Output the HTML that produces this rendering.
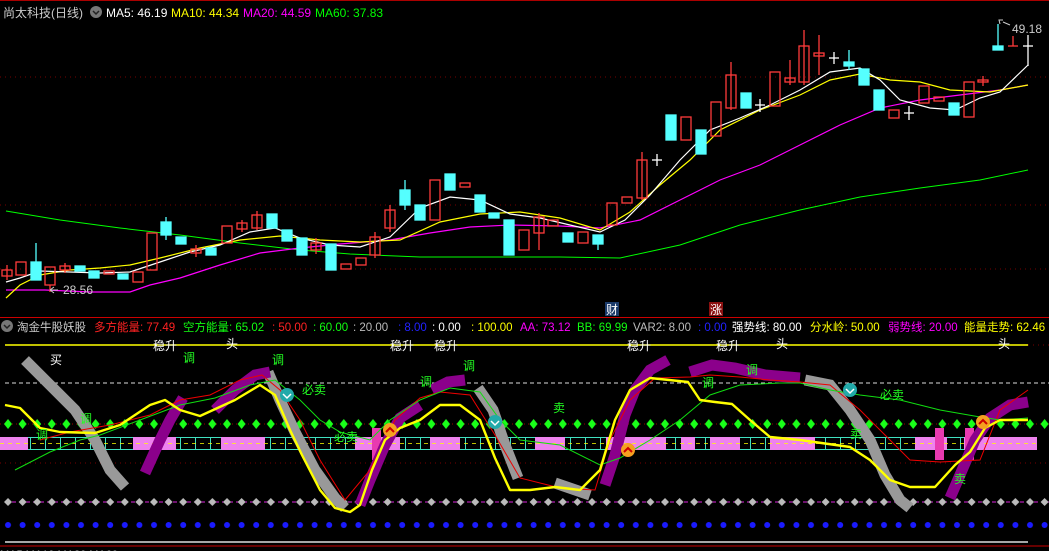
<!DOCTYPE html>
<html><head><meta charset="utf-8"><style>
html,body{margin:0;padding:0;background:#000;width:1049px;height:551px;overflow:hidden}
svg{display:block}
text{font-family:"Liberation Sans","Noto Sans CJK SC",sans-serif}
</style></head><body>
<svg width="1049" height="551" viewBox="0 0 1049 551" xmlns="http://www.w3.org/2000/svg">
<defs>
<pattern id="gd" x="3" y="0" width="14.6" height="551" patternUnits="userSpaceOnUse"><path d="M5 419 L9 424 L5 429 L1 424Z" fill="#19ff19"/></pattern>
<pattern id="wd" x="3" y="0" width="14.6" height="551" patternUnits="userSpaceOnUse"><path d="M5 498 L9 502 L5 506 L1 502Z" fill="#bbb"/></pattern>
<pattern id="bd" x="3" y="0" width="14.6" height="551" patternUnits="userSpaceOnUse"><circle cx="5" cy="525" r="3" fill="#1a1aff"/></pattern>
<pattern id="bx" x="0" y="0" width="15" height="551" patternUnits="userSpaceOnUse"><rect x="0.5" y="437.5" width="15" height="12" fill="none" stroke="#40e0c0" stroke-width="1"/></pattern>
</defs>
<rect width="1049" height="551" fill="#000"/>
<line x1="0" y1="0.5" x2="1049" y2="0.5" stroke="#a00" />
<line x1="0" y1="317.5" x2="1049" y2="317.5" stroke="#c00"/>
<line x1="0" y1="205" x2="1049" y2="205" stroke="#700" stroke-dasharray="1 4"/>
<line x1="0" y1="269" x2="1049" y2="269" stroke="#700" stroke-dasharray="1 4"/>
<line x1="0" y1="77" x2="1049" y2="77" stroke="#700" stroke-dasharray="1 4"/>
<!-- header -->
<text y="17" font-size="12"><tspan x="3" fill="#ccc">尚太科技(日线)</tspan><tspan x="106" fill="#fff">MA5: 46.19</tspan><tspan x="171" fill="#ff0">MA10: 44.34</tspan><tspan x="243" fill="#f0f">MA20: 44.59</tspan><tspan x="315" fill="#0f0">MA60: 37.83</tspan></text>
<circle cx="96" cy="12" r="6" fill="#777"/><path d="M93 11 L96 14 L99 11" stroke="#222" fill="none" stroke-width="1.5"/>
<!-- MA lines -->
<polyline fill="none" stroke="#0f0" stroke-width="1" points="6,211 60,220 120,228 180,235 240,243 300,250 350,254 420,257 500,257 560,257 620,258 680,245 740,225 800,210 860,197 920,188 980,180 1028,170"/>
<polyline fill="none" stroke="#f0f" stroke-width="1.2" points="6,290 45,290 90,292 130,292 150,285 180,278 220,265 260,253 300,248 340,244 390,240 430,233 470,227 510,225 560,226 600,228 640,220 680,200 720,180 760,165 800,145 840,125 880,108 920,100 960,95 1000,90 1028,85"/>
<polyline fill="none" stroke="#ff0" stroke-width="1.2" points="6,298 20,285 40,275 70,270 100,268 130,265 160,258 200,248 240,240 280,236 320,240 360,242 400,240 440,222 480,214 520,212 560,218 600,230 630,212 660,185 690,160 720,130 760,110 800,95 830,80 860,74 890,80 920,82 950,90 990,92 1028,85"/>
<polyline fill="none" stroke="#fff" stroke-width="1.2" points="6,282 20,278 40,271 70,272 100,273 130,272 160,262 190,252 220,245 250,232 275,228 300,238 330,245 360,247 390,237 420,208 450,197 480,200 510,214 540,218 570,225 600,232 625,220 650,195 680,160 710,130 740,118 770,105 800,90 830,72 860,68 880,80 900,100 930,108 955,110 980,98 1000,92 1028,65"/>
<!-- candles -->
<g stroke-width="1.3">
<g stroke="#ff3b3b" fill="none">
<line x1="7" y1="265" x2="7" y2="280"/><rect x="2" y="270" width="10" height="6"/>
<rect x="16" y="262" width="10" height="13"/>
<rect x="45" y="267" width="10" height="18"/><line x1="50" y1="285" x2="50" y2="292"/>
<rect x="60" y="266" width="10" height="4"/><line x1="65" y1="263" x2="65" y2="273"/>
<rect x="104" y="271" width="10" height="3"/>
<rect x="133" y="272" width="10" height="10"/>
<rect x="147" y="233" width="10" height="37"/>
<rect x="191" y="249" width="10" height="4"/><line x1="196" y1="245" x2="196" y2="257"/>
<rect x="222" y="226" width="10" height="17"/>
<rect x="237" y="223" width="10" height="6"/><line x1="242" y1="220" x2="242" y2="232"/>
<rect x="252" y="215" width="10" height="13"/><line x1="257" y1="211" x2="257" y2="230"/>
<rect x="311" y="243" width="10" height="7"/><line x1="316" y1="238" x2="316" y2="254"/>
<rect x="341" y="264" width="10" height="5"/>
<rect x="356" y="258" width="10" height="7"/>
<rect x="370" y="237" width="10" height="18"/><line x1="375" y1="232" x2="375" y2="258"/>
<rect x="385" y="210" width="10" height="18"/><line x1="390" y1="205" x2="390" y2="232"/>
<rect x="430" y="180" width="10" height="40"/>
<rect x="460" y="183" width="10" height="4"/>
<rect x="519" y="230" width="10" height="20"/>
<rect x="534" y="217" width="10" height="16"/><line x1="539" y1="213" x2="539" y2="250"/>
<rect x="548" y="220" width="10" height="6"/>
<rect x="578" y="232" width="10" height="11"/>
<rect x="607" y="203" width="10" height="22"/>
<rect x="622" y="197" width="10" height="6"/>
<rect x="637" y="160" width="10" height="38"/><line x1="642" y1="152" x2="642" y2="200"/>
<rect x="681" y="117" width="10" height="23"/>
<rect x="711" y="102" width="10" height="34"/>
<rect x="726" y="75" width="10" height="33"/><line x1="731" y1="62" x2="731" y2="110"/>
<rect x="770" y="72" width="10" height="34"/>
<rect x="785" y="78" width="10" height="4"/><line x1="790" y1="60" x2="790" y2="85"/>
<rect x="799" y="46" width="10" height="36"/><line x1="804" y1="30" x2="804" y2="85"/>
<rect x="814" y="53" width="10" height="3"/><line x1="819" y1="35" x2="819" y2="75"/>
<rect x="889" y="110" width="10" height="8"/>
<rect x="919" y="86" width="10" height="17"/>
<rect x="934" y="97" width="10" height="4"/>
<rect x="964" y="82" width="10" height="35"/>
<rect x="978" y="80" width="10" height="2"/><line x1="983" y1="76" x2="983" y2="86"/>
</g>
<g stroke="#55ffff" fill="#55ffff">
<rect x="31" y="262" width="10" height="18"/><line x1="36" y1="243" x2="36" y2="262"/>
<rect x="75" y="266" width="10" height="5"/>
<rect x="89" y="271" width="10" height="7"/>
<rect x="118" y="274" width="10" height="5"/>
<rect x="161" y="222" width="10" height="13"/><line x1="166" y1="217" x2="166" y2="240"/>
<rect x="176" y="237" width="10" height="7"/>
<rect x="206" y="248" width="10" height="7"/>
<rect x="267" y="214" width="10" height="14"/>
<rect x="282" y="230" width="10" height="11"/>
<rect x="297" y="238" width="10" height="17"/>
<rect x="326" y="244" width="10" height="26"/>
<rect x="400" y="190" width="10" height="15"/><line x1="405" y1="180" x2="405" y2="210"/>
<rect x="415" y="205" width="10" height="15"/>
<rect x="445" y="174" width="10" height="16"/>
<rect x="475" y="195" width="10" height="17"/>
<rect x="489" y="213" width="10" height="5"/>
<rect x="504" y="220" width="10" height="35"/>
<rect x="563" y="233" width="10" height="9"/>
<rect x="593" y="235" width="10" height="9"/><line x1="598" y1="244" x2="598" y2="250"/>
<rect x="666" y="115" width="10" height="25"/>
<rect x="696" y="130" width="10" height="24"/>
<rect x="741" y="93" width="10" height="15"/>
<rect x="844" y="62" width="10" height="4"/><line x1="849" y1="50" x2="849" y2="70"/>
<rect x="859" y="69" width="10" height="16"/>
<rect x="874" y="90" width="10" height="20"/>
<rect x="949" y="103" width="10" height="12"/>
<rect x="993" y="46" width="10" height="4"/><line x1="998" y1="24" x2="998" y2="46"/>
</g>
<g stroke="#fff" fill="none">
<line x1="652" y1="160" x2="662" y2="160"/><line x1="657" y1="154" x2="657" y2="166"/>
<line x1="755" y1="105" x2="765" y2="105"/><line x1="760" y1="99" x2="760" y2="112"/>
<line x1="829" y1="58" x2="839" y2="58"/><line x1="834" y1="52" x2="834" y2="64"/>
<line x1="904" y1="113" x2="914" y2="113"/><line x1="909" y1="106" x2="909" y2="120"/>
<line x1="1023" y1="46" x2="1033" y2="46"/><line x1="1028" y1="35" x2="1028" y2="66"/>
<line x1="1008" y1="46" x2="1018" y2="46" stroke="#ff3b3b"/><line x1="1013" y1="36" x2="1013" y2="46" stroke="#ff3b3b"/>
</g>
</g>
<path d="M1000 24 L999 20 L1003 20 M1003 22 L1010 25" stroke="#ccc" fill="none"/>
<text x="1012" y="33" font-size="12" fill="#ccc">49.18</text>
<path d="M58 290 L50 290 M50 290 L54 287 M50 290 L54 293" stroke="#ccc" fill="none"/>
<text x="63" y="294" font-size="12" fill="#ccc">28.56</text>
<rect x="605" y="302" width="14" height="14" fill="#1a3a6a"/><text x="606" y="314" font-size="12" fill="#fff">财</text>
<rect x="709" y="302" width="14" height="14" fill="#8a1010"/><text x="710" y="314" font-size="12" fill="#fff">涨</text>
<!-- lower header -->
<circle cx="7" cy="326" r="6" fill="#777"/><path d="M4 325 L7 328 L10 325" stroke="#222" fill="none" stroke-width="1.5"/>
<text y="331" font-size="11.5"><tspan x="17" fill="#ccc">淘金牛股妖股</tspan><tspan x="94" fill="#f22">多方能量: 77.49</tspan><tspan x="183" fill="#1f1">空方能量: 65.02</tspan><tspan x="272" fill="#f22">: 50.00</tspan><tspan x="313" fill="#1f1">: 60.00</tspan><tspan x="353" fill="#bbb">: 20.00</tspan><tspan x="398" fill="#22f">: 8.00</tspan><tspan x="432" fill="#fff">: 0.00</tspan><tspan x="471" fill="#ff0">: 100.00</tspan><tspan x="520" fill="#f0f">AA: 73.12</tspan><tspan x="577" fill="#1f1">BB: 69.99</tspan><tspan x="633" fill="#bbb">VAR2: 8.00</tspan><tspan x="698" fill="#22f">: 0.00</tspan><tspan x="732" fill="#fff">强势线: 80.00</tspan><tspan x="810" fill="#ff0">分水岭: 50.00</tspan><tspan x="888" fill="#f0f">弱势线: 20.00</tspan><tspan x="964" fill="#ff0">能量走势: 62.46</tspan></text>
<!-- lower panel guides -->
<line x1="5" y1="345" x2="1028" y2="345" stroke="#ff0" stroke-width="1.5"/>
<line x1="1028" y1="345" x2="1049" y2="345" stroke="#700" stroke-dasharray="1 4"/>
<line x1="5" y1="383" x2="1049" y2="383" stroke="#ddd" stroke-dasharray="4 3"/>
<line x1="0" y1="424" x2="1049" y2="424" stroke="#900" stroke-dasharray="1 3"/>
<line x1="0" y1="463" x2="1049" y2="463" stroke="#700" stroke-dasharray="1 4"/>
<line x1="5" y1="502" x2="1049" y2="502" stroke="#d2d" stroke-dasharray="4 3"/>
<line x1="5" y1="542" x2="1028" y2="542" stroke="#ddd" stroke-width="1.5"/>
<line x1="0" y1="546" x2="1049" y2="546" stroke="#c00"/>
<rect x="0" y="415" width="1049" height="18" fill="url(#gd)"/>
<rect x="0" y="495" width="1049" height="14" fill="url(#wd)"/>
<rect x="0" y="519" width="1049" height="12" fill="url(#bd)"/>
<!-- band -->
<rect x="28" y="437" width="1008" height="13" fill="url(#bx)"/>
<g fill="#ee82ee">
<rect x="0" y="437" width="28" height="13"/><rect x="133" y="437" width="43" height="13"/><rect x="221" y="437" width="44" height="13"/>
<rect x="355" y="437" width="45" height="13"/><rect x="430" y="437" width="30" height="13"/><rect x="535" y="437" width="30" height="13"/>
<rect x="606" y="437" width="60" height="13"/><rect x="681" y="437" width="14" height="13"/><rect x="710" y="437" width="30" height="13"/>
<rect x="770" y="437" width="45" height="13"/><rect x="915" y="437" width="32" height="13"/><rect x="964" y="437" width="73" height="13"/>
</g>
<line x1="0" y1="443.5" x2="1036" y2="443.5" stroke="#ff0" stroke-dasharray="4 4" stroke-width="0.8"/>
<g fill="#e83ab0"><rect x="372" y="428" width="9" height="32"/><rect x="935" y="428" width="9" height="32"/><rect x="965" y="428" width="9" height="32"/></g>
<!-- ribbons -->
<g fill="none" stroke-linejoin="miter" stroke-linecap="butt">
<g stroke="#999" stroke-width="11">
<polyline points="25,360 50,385 75,410 95,440 110,470 125,487"/>
<polyline points="268,372 280,400 295,432 315,470 335,498 345,508"/>
<polyline points="478,388 493,410 505,445 518,478"/>
<polyline points="555,483 590,495"/>
<polyline points="805,380 830,385 850,410 870,440 885,475 900,500 910,508"/>
</g>
<g stroke="#8b008b" stroke-width="11">
<polyline points="145,473 160,440 170,420 183,398"/>
<polyline points="215,410 235,390 255,375 270,372"/>
<polyline points="360,505 370,480 385,445 400,418 420,405"/>
<polyline points="432,390 448,382 465,380"/>
<polyline points="605,485 615,455 625,415 635,390 650,370 668,360"/>
<polyline points="690,372 712,365 735,368 765,375 800,378"/>
<polyline points="950,498 960,475 975,440 990,418 1010,405 1028,402"/>
</g>
<polyline stroke="#e00" stroke-width="1" points="40,440 70,432 110,425 150,415 180,400 210,395 240,380 262,375 280,390 300,420 320,460 345,500 370,470 395,420 420,398 440,392 470,395 495,435 520,478 560,488 595,490 610,440 630,400 655,378 690,377 710,375 740,377 770,380 800,382 830,385 860,410 880,430 910,460 940,462 980,460 1000,410 1028,390"/>
<polyline stroke="#1d1" stroke-width="1" points="15,470 50,452 80,440 100,435 140,420 180,405 215,398 250,385 275,380 300,400 320,420 340,432 370,440 390,420 420,400 450,388 480,392 500,420 520,440 560,445 600,465 620,458 650,440 680,420 710,395 740,385 780,383 800,383 830,390 860,395 900,400 940,410 980,417 1000,420 1028,418"/>
<polyline stroke="#ff0" stroke-width="2.4" stroke-linejoin="round" points="5,405 20,408 40,428 60,432 95,433 120,425 150,405 165,400 180,410 200,416 235,400 260,385 275,395 290,430 302,455 320,490 335,508 350,512 360,505 372,470 385,440 400,428 420,420 440,405 460,405 480,420 495,458 510,490 530,490 555,487 580,490 600,470 615,420 630,390 650,378 688,382 700,400 715,402 732,404 750,420 770,437 800,440 850,447 870,460 890,480 910,487 935,487 955,465 970,452 985,428 1000,420 1028,420"/>
</g>
<!-- labels -->
<g font-size="12" fill="#fff">
<text x="50" y="364">买</text><text x="153" y="350">稳升</text><text x="226" y="348">头</text>
<text x="390" y="350">稳升</text><text x="434" y="350">稳升</text><text x="627" y="350">稳升</text>
<text x="716" y="350">稳升</text><text x="776" y="348">头</text><text x="998" y="348">头</text>
</g>
<g font-size="12" fill="#2f2">
<text x="183" y="362">调</text><text x="272" y="364">调</text><text x="80" y="423">调</text><text x="36" y="439">调</text>
<text x="420" y="386">调</text><text x="463" y="370">调</text><text x="702" y="387">调</text><text x="746" y="374">调</text>
<text x="553" y="412">卖</text><text x="850" y="438">卖</text><text x="954" y="483">卖</text>
<text x="302" y="394">必卖</text><text x="334" y="441">必卖</text><text x="880" y="399">必卖</text>
</g>
<g>
<circle cx="287" cy="395" r="7" fill="#2aa"/><path d="M283 394 L287 398 L291 394" stroke="#fff" fill="none" stroke-width="1.5"/>
<circle cx="495" cy="422" r="7" fill="#2aa"/><path d="M491 421 L495 425 L499 421" stroke="#fff" fill="none" stroke-width="1.5"/>
<circle cx="850" cy="390" r="7" fill="#2aa"/><path d="M846 389 L850 393 L854 389" stroke="#fff" fill="none" stroke-width="1.5"/>
<circle cx="390" cy="430" r="7" fill="#f5a020"/><path d="M386 432 L390 428 L394 432" stroke="#c00" fill="none" stroke-width="2"/>
<circle cx="628" cy="450" r="7" fill="#f5a020"/><path d="M624 452 L628 448 L632 452" stroke="#c00" fill="none" stroke-width="2"/>
<circle cx="983" cy="422" r="7" fill="#f5a020"/><path d="M979 424 L983 420 L987 424" stroke="#c00" fill="none" stroke-width="2"/>
</g>
<text x="0" y="558" font-size="11" fill="#ccc">MA5 MA10 MA20 MA60</text>
</svg>
</body></html>
